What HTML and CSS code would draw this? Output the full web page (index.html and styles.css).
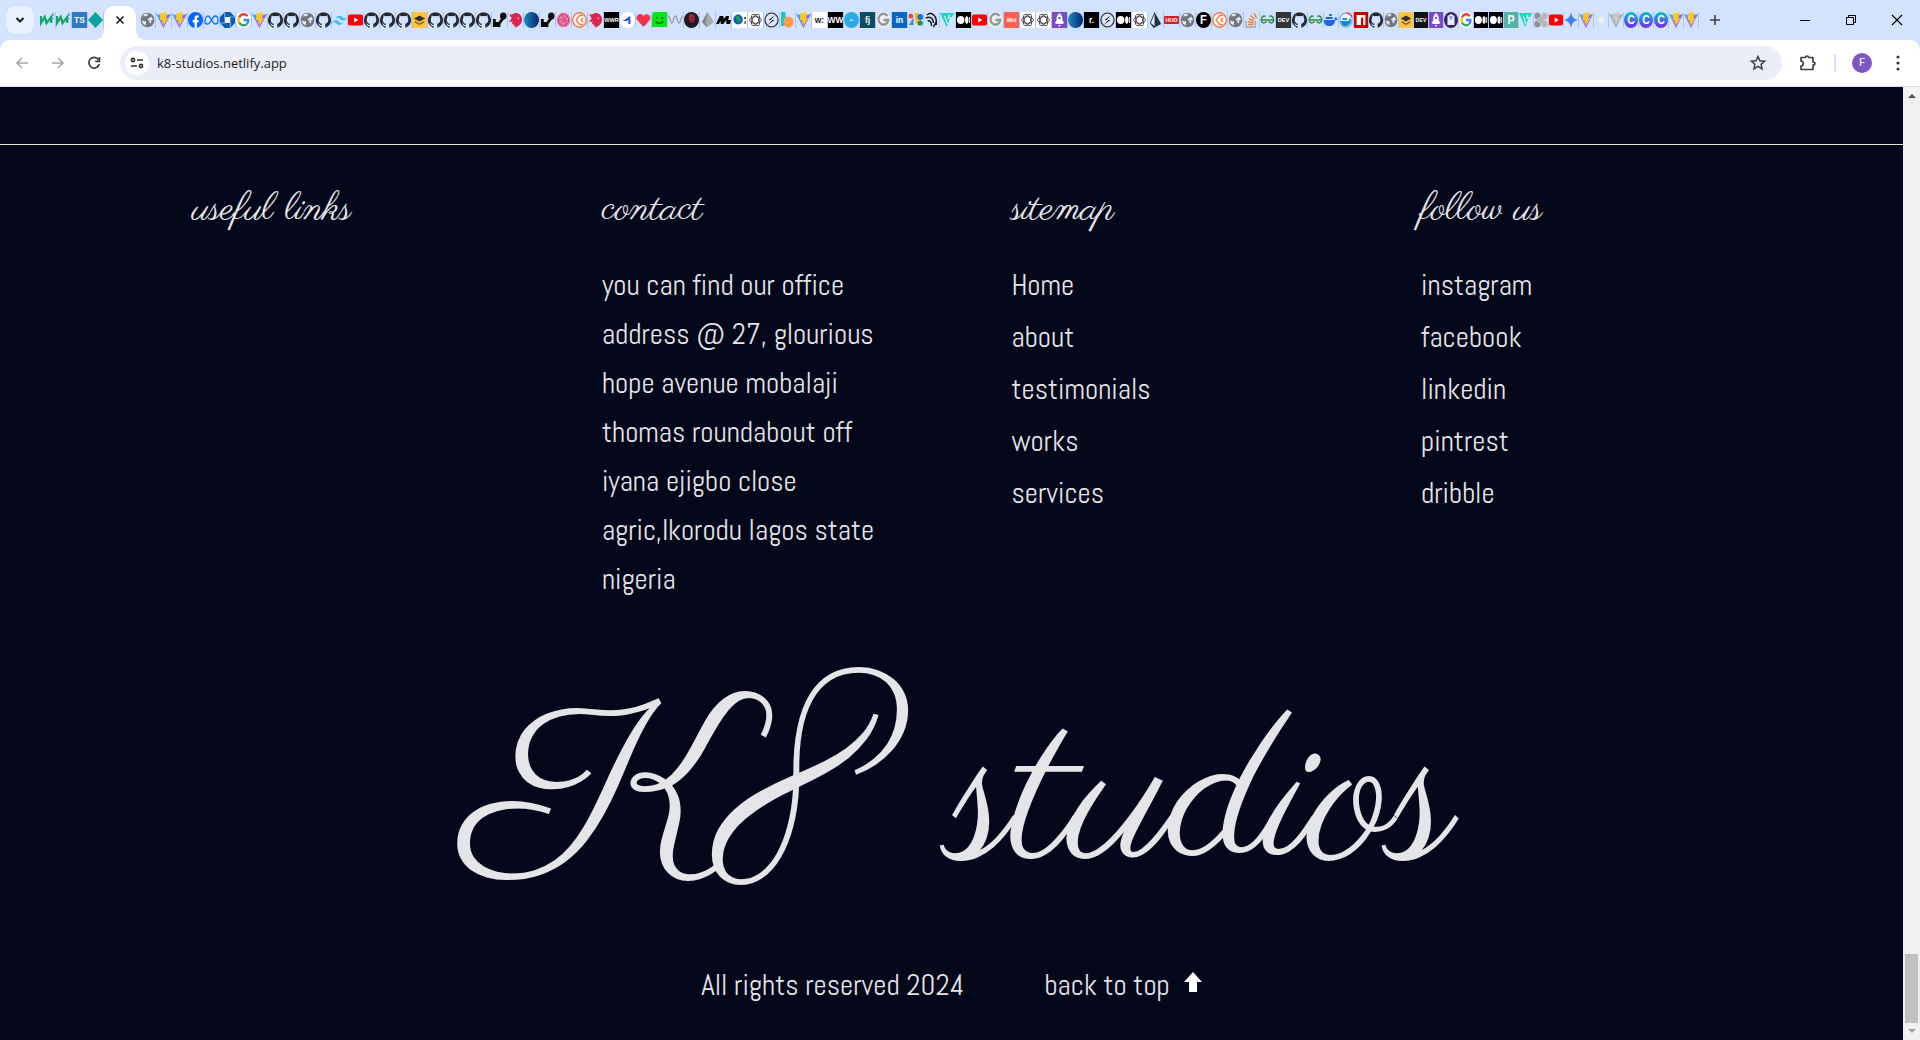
FILE: index.html
```html
<!DOCTYPE html>
<html lang="en">
<head>
<meta charset="utf-8">
<title>K8 studios</title>
<link rel="stylesheet" href="styles.css">
</head>
<body>
<svg class="sprite" aria-hidden="true">
  <defs>
    <linearGradient id="vp" x1="0" y1="0" x2="1" y2="1"><stop offset="0" stop-color="#41b0ff"/><stop offset="1" stop-color="#bd34fe"/></linearGradient>
    <linearGradient id="bg1" x1="0" y1="0" x2="1" y2="0"><stop offset="0" stop-color="#1a8fc4"/><stop offset="1" stop-color="#06256b"/></linearGradient>
    <linearGradient id="cg" x1="0" y1="0" x2="0" y2="1"><stop offset="0" stop-color="#06c1cf"/><stop offset="1" stop-color="#7a28e6"/></linearGradient>
  </defs>
  <symbol id="globe" viewBox="0 0 16 16"><circle cx="8" cy="8" r="7.300" fill="#74777a"/><path d="M3 4.500c2-1 3 .5 4.500-.5C8.500 3 8 2 9 1.500l-4 .5zM1.500 8.500l5 1c.5 1-1 2 0 4l-3-1.500zM9 6.500l3-2 2 3-2 1-.5 3-2-1.500.5-1.500-2-.5z" fill="#dde8f8"/></symbol>
  <symbol id="vite" viewBox="0 0 16 16"><path d="M0 2 8 16 16 2 8 3.500z" fill="url(#vp)"/><path d="M12 0 4.500 1.500 4.500 8.500l2.300-.5-.7 3.700 2-.6-1 4L13 6l-2.500.5z" fill="#ffc61c"/></symbol>
  <symbol id="vgrey" viewBox="0 0 16 16"><path d="M0 2 8 16 16 2 8 3.500z" fill="#a9aaad"/><path d="M12 0 4.500 1.500 4.500 8.500l2.300-.5-.7 3.700 2-.6-1 4L13 6l-2.500.5z" fill="#c9c9c9"/></symbol>
  <symbol id="fb" viewBox="0 0 16 16"><circle cx="8" cy="8" r="8" fill="#0866ff"/><path d="M7 16v-5.500H5V8h2V6.500C7 4 8.500 3 11.500 3.400v2C10 5.300 9.500 5.600 9.500 7v1h2l-.5 2.500H9.500V16z" fill="#fff"/></symbol>
  <symbol id="meta" viewBox="0 0 16 16"><path d="M1 10.500C1 6.500 2.500 4 4.500 4 7 4 9 12 12 12c2 0 3-1 3-3 0-3-1-5-3-5-3 0-5 8-8 8-2 0-3-.500-3-1.500z" fill="none" stroke="#0a73e8" stroke-width="1.400"/></symbol>
  <symbol id="oct" viewBox="0 0 16 16"><path d="M5 0h6l5 5v6l-5 5H5l-5-5V5z" fill="#0b5cab"/><path d="M5 5h6v6H5z" fill="#eaf3ff"/><path d="M5 0v6M16 5h-6M11 16v-6M0 11h6" stroke="#7fb0e6"/></symbol>
  <symbol id="google" viewBox="0 0 16 16"><circle cx="8" cy="8" r="8" fill="#fff"/><g fill="none" stroke-width="2.500"><path d="M12.300 4.200A5.300 5.300 0 0 0 3.400 5.400" stroke="#ea4335"/><path d="M3.400 5.400a5.300 5.300 0 0 0 0 5.200" stroke="#fbbc05"/><path d="M3.400 10.600a5.300 5.300 0 0 0 8 1.500" stroke="#34a853"/><path d="M11.400 12.100A5 5 0 0 0 13.200 8H8" stroke="#4285f4"/></g></symbol>
  <symbol id="ggrey" viewBox="0 0 16 16"><circle cx="8" cy="8" r="8" fill="#eee"/><path d="M12.300 4.200A5.300 5.300 0 1 0 13.200 8H8" fill="none" stroke="#929497" stroke-width="2.300"/></symbol>
  <symbol id="gh" viewBox="0 0 16 16"><path d="M8 .2a8 8 0 0 0-2.500 15.600c.4.100.5-.2.500-.4v-1.500c-2.200.5-2.700-1-2.700-1-.4-.9-.9-1.200-.9-1.200-.7-.5.100-.5.100-.5.800.1 1.200.9 1.200.9.700 1.200 1.900.9 2.300.6.100-.5.300-.8.500-1-1.800-.2-3.600-.9-3.600-4 0-.9.300-1.600.8-2.100 0-.2-.3-1 .1-2.200 0 0 .7-.2 2.200.8a7.500 7.500 0 0 1 4 0c1.500-1 2.200-.8 2.200-.8.400 1.200.1 2 .1 2.200.5.500.8 1.200.8 2.100 0 3.100-1.900 3.800-3.700 4 .3.200.6.700.6 1.500v2.200c0 .2.100.5.500.4A8 8 0 0 0 8 .2z" fill="#24292f"/></symbol>
  <symbol id="tw" viewBox="0 0 16 16"><path d="M4 7c.6-2.200 2-3.200 4-3.200 3 0 3.400 2.200 5 2.600 1 .3 2-.2 3-1.300-.6 2.200-2 3.300-4 3.300-3 0-3.400-2.200-5-2.600-1-.3-2 .1-3 1.200zM0 11.500c.6-2.200 2-3.200 4-3.200 3 0 3.400 2.200 5 2.600 1 .3 2-.2 3-1.300-.6 2.200-2 3.300-4 3.300-3 0-3.400-2.200-5-2.600-1-.3-2 .1-3 1.200z" fill="#38bdf8"/></symbol>
  <symbol id="yt" viewBox="0 0 16 16"><rect y="2.500" width="16" height="11" rx="2" fill="#f00"/><path d="m6.500 5.500 4.500 2.500-4.500 2.500z" fill="#fff"/></symbol>
  <symbol id="stack" viewBox="0 0 16 16"><path d="M0 0h16v16H0z" fill="#ffc33c"/><path d="m8 3.500 6 3-6 3-6-3z" fill="#333"/><path d="m3 9 5 2.500L13 9v1.500l-5 2.500-5-2.500z" fill="#6b6250"/></symbol>
  <symbol id="arm" viewBox="0 0 16 16"><circle cx="12" cy="4" r="3.500" fill="#0a0a0a"/><path d="M1 7h3v3h3l3-4 3 1-4 5v3H1z" fill="#0a0a0a"/></symbol>
  <symbol id="bird" viewBox="0 0 16 16"><path d="M1 2c3 2 5-1.500 8-1 4 .5 6.500 4 6 7.500C14 12.500 11 15 7 15.500l1-2-2.500.5 1-2-2.500.5 1-2.500L1 9.500l3-3z" fill="#e0234e"/><path d="m10 5.500 2 .5-1 1.500z" fill="#fff"/></symbol>
  <symbol id="blue" viewBox="0 0 16 16"><circle cx="8" cy="8" r="8" fill="url(#bg1)"/></symbol>
  <symbol id="drib" viewBox="0 0 16 16"><circle cx="8" cy="8" r="7.500" fill="#f082ac"/><path d="M5 2c4 4 5 7 6 11.500M2 8c5 0 8-1 10.500-4.500M4 13c2-4 6-5 10-4" fill="none" stroke="#bf3c78"/><circle cx="8" cy="8" r="5.500" fill="none" stroke="#bf3c78"/></symbol>
  <symbol id="orng" viewBox="0 0 16 16"><circle cx="8" cy="8" r="7.200" fill="#fff" stroke="#f47b42" stroke-width="1.500"/><path d="M12 3.500H8L4.500 8 8 12.500h4M12 6 9.500 8l2.500 2" fill="none" stroke="#f47b42" stroke-width="1.500"/></symbol>
  <symbol id="plane" viewBox="0 0 16 16"><circle cx="8" cy="8" r="8" fill="#fff"/><path d="m3 9 8-5v8H9V8L7 9z" fill="#274fc7"/></symbol>
  <symbol id="heart" viewBox="0 0 16 16"><path d="M8 15 .8 7.500C-1 4 4 0 7 3l1 1C10 1 15 2 15.500 6c.2 2-7.500 9-7.500 9z" fill="#f13352"/></symbol>
  <symbol id="face" viewBox="0 0 16 16"><path d="M1 0h15v15H0V5z" fill="#07e512"/><path d="M5 5v2M11 5v2M4 9.500c2 2.500 6 2.500 8-.5" fill="none" stroke="#064d12" stroke-width="1.300"/></symbol>
  <symbol id="wave" viewBox="0 0 16 16"><path d="M0 4c3 0 2 7 4 7s2-7 4-7 2 7 4 7 1-6 4-7" fill="none" stroke="#9b9ca1" stroke-width="1.300"/></symbol>
  <symbol id="dark" viewBox="0 0 16 16"><circle cx="8" cy="8" r="8" fill="#22191c"/><path d="M6 2c5 0 7 3 5 6l-1 3-4-1-1-5z" fill="#a52a42"/><path d="M7 6h3M7 9h2" stroke="#22191c"/></symbol>
  <symbol id="gem" viewBox="0 0 16 16"><path d="m8 0 4 8-5 7-5-5z" fill="#85868b"/><path d="m8 0 7 10-7 5-2-5z" fill="#aaa"/></symbol>
  <symbol id="mm" viewBox="0 0 16 16"><path d="m0 12 4-8h4v3l3-3h3l-1 4h3l-1 4h-4V8l-3 4H5V9l-2 3z" fill="#050505"/></symbol>
  <symbol id="earth" viewBox="0 0 16 16"><path d="M0 0h16v16H0z" fill="#fff"/><circle cx="6.500" cy="7.500" r="5" fill="#0a59c9"/><path d="M4 4h3l3 4-3 3-2-3z" fill="#19a44a"/><circle cx="14" cy="6" r="1"/><path d="M13.500 9h1v3h-1z"/></symbol>
  <symbol id="ai" viewBox="0 0 16 16"><path d="M0 0h16v16H0z" fill="#fff"/><g fill="none" stroke="#3c3c3c" stroke-width=".9"><ellipse cx="8" cy="8" rx="6.300" ry="3.400"/><ellipse cx="8" cy="8" rx="6.300" ry="3.400" transform="rotate(60 8 8)"/><ellipse cx="8" cy="8" rx="6.300" ry="3.400" transform="rotate(120 8 8)"/></g></symbol>
  <symbol id="bolt" viewBox="0 0 16 16"><circle cx="8" cy="8" r="7" fill="#d9e6fb" stroke="#222" stroke-width="1.200"/><path d="m12 3-7 5h2zM4 13l7-5H9z"/></symbol>
  <symbol id="shapes" viewBox="0 0 16 16"><path d="M1 0h5v14H1z" fill="#24c4ba"/><circle cx="9" cy="10" r="5.500" fill="#ff9d4d"/></symbol>
  <symbol id="multi" viewBox="0 0 16 16"><circle cx="3" cy="4" r="2.500" fill="#ea4335"/><path d="m7 1 4 0 1 13-4-3z" fill="#fbbc05"/><circle cx="13" cy="5" r="3" fill="#1769e0"/><path d="M1 13 6 5v8z" fill="#4285f4"/><circle cx="13" cy="11" r="2.600" fill="#238b47"/></symbol>
  <symbol id="feather" viewBox="0 0 16 16"><path d="M3 3c5-4 11 1 10 7l-3 5M2 6c4-2 8 0 8 5M4 9c3-1 4 2 4 5M6 1c5 1 8 5 7 12" fill="none" stroke="#161616" stroke-width="1.500"/></symbol>
  <symbol id="teal" viewBox="0 0 16 16"><path d="M0 1h15l-2 4H7l4 1-4 9z" fill="#22d3be"/><path d="m5 4 3 8M10 3l-1 4" stroke="#fff"/></symbol>
  <symbol id="med" viewBox="0 0 16 16"><path d="M0 0h16v16H0z"/><circle cx="5" cy="8" r="4" fill="#fff"/><ellipse cx="11.500" cy="8" rx="1.800" ry="3.800" fill="#fff"/><path d="M14.500 5v6" stroke="#fff"/></symbol>
  <symbol id="rocket" viewBox="0 0 16 16"><path d="M0 0h16v16H0z" fill="#7b4bbf"/><path d="M8 1c3 2 3.500 5 3 7l2 3-2 1H5l-2-1 2-3c-.5-2 0-5 3-7zM6.500 13h3L8 15z" fill="#fff"/><circle cx="8" cy="6" r="1.300" fill="#7b4bbf"/></symbol>
  <symbol id="prism" viewBox="0 0 16 16"><path d="m7 0 7 12-8 4-4-5z" fill="#1b3448"/><path d="m7 2 0 12-4-3z" fill="#e8f0f6"/></symbol>
  <symbol id="so" viewBox="0 0 16 16"><path d="M2 9v6h10V9" fill="none" stroke="#a5a6a9" stroke-width="1.400"/><path d="M4 12.500h6M4 9.800l6 1M5 6.700l5.500 2.500M7 3.500l4.500 4M10.500 1l3 5" stroke="#f48024" stroke-width="1.400"/></symbol>
  <symbol id="gfg" viewBox="0 0 16 16"><path d="M1 8h14M6 4.500C3 3 1 6 1.500 9c1 3 5 2 5 0M10 4.500c3-1.500 5 1.500 4.500 4.500-1 3-5 2-5 0" fill="none" stroke="#2f8d46" stroke-width="1.500"/></symbol>
  <symbol id="dock" viewBox="0 0 16 16"><path d="M0 8h12c0-2 1-3 2-3 0 1 1 2 2 2-1 1-2 1-3 1-1 5-4 6-7 6-4 0-6-2-6-6zM2 5h8v2H2zM6 2h3v2H6z" fill="#1d63ed"/></symbol>
  <symbol id="dock2" viewBox="0 0 16 16"><circle cx="8" cy="8" r="7" fill="#eef7ff" stroke="#8aabc2" stroke-width="1.400"/><path d="M2 9h9l1-3 2 2c-1 5-4 6-7 6-3 0-5-2-5-5zM4 6h5v2H4z" fill="#128ad0"/><path d="M9 1c3 0 5 2 6 4" fill="none" stroke="#f36" stroke-width="1.500"/></symbol>
  <symbol id="npm" viewBox="0 0 16 16"><path d="M0 0h16v16H0z" fill="#cb0000"/><path d="M3 3h10v10h-2.500V5.500H8V13H3z" fill="#fff"/></symbol>
  <symbol id="robe" viewBox="0 0 16 16"><circle cx="8" cy="8" r="8" fill="#33236b"/><path d="m4 4 4-2 4 2v9H4z" fill="#e9eeff"/><path d="M6 5h4M8 5v3" stroke="#3a70b4"/></symbol>
  <symbol id="grey" viewBox="0 0 16 16"><g fill="#8f9093"><circle cx="4" cy="4" r="3.500"/><circle cx="4" cy="12" r="3.500"/></g><g fill="#b8b8ba"><circle cx="12" cy="4" r="3.500"/><circle cx="12" cy="12" r="3.500"/><path d="M4 5h8v6H4z"/></g></symbol>
  <symbol id="star" viewBox="0 0 16 16"><path d="M8 0c1 5 3 7 8 8-5 1-7 3-8 8-1-5-3-7-8-8 5-1 7-3 8-8z" fill="#437fe8"/></symbol>
  <symbol id="nn" viewBox="0 0 16 16"><path d="M1 4v7l4-6 2 6 5-6v6" fill="none" stroke="#12a66c" stroke-width="2.400"/><path d="M14 1v3M14 6v1" stroke="#12a66c"/></symbol>
  <symbol id="dia" viewBox="0 0 16 16"><path d="m8 0 8 8-8 8-8-8z" fill="#0aa5a0"/></symbol>
</svg>

<header class="browser">
  <div class="tabstrip">
    <button class="search-tabs" type="button" aria-label="Search tabs"><svg width="10" height="10" viewBox="0 0 10 10"><path d="m1.500 3 3.500 3.500L8.500 3" fill="none" stroke="#1f1f1f" stroke-width="2"/></svg></button>
    <div class="tabs" data-tabs="nn nn t:TS:#3178c6:#fff dia"></div>
    <div class="active-tab"><button type="button" aria-label="Close tab"><svg width="10" height="10" viewBox="0 0 10 10"><path d="m1.500 1.500 7 7m0-7-7 7" stroke="#1f1f1f" stroke-width="1.600"/></svg></button></div>
    <div class="tabs" data-tabs="globe vite vite fb meta oct google vite gh gh globe gh tw yt gh gh gh stack gh gh gh gh arm bird blue arm drib orng bird t:WWR:#000:#fff plane heart face wave dark gem mm earth ai bolt shapes vite t:w&#58;:#fff:#222 t:WW:#000:#fff c:-:#2babe2:#bfe9fa t:fj:#0e4c62:#fff ggrey t:in:#0a66c2:#fff multi feather teal med yt ggrey t:99d:#fe5f50:#fff ai ai rocket blue t:r.:#000:#fff bolt med ai prism b:HUD:#d41f26:#fff globe c:F:#000:#fff orng globe so gfg t:DEV:#333:#fff gh gfg"></div>
    <div class="tabs tight" data-tabs="dock dock2 npm gh globe stack t:DEV:#111:#fff rocket robe google med med t:P:#55b3a5:#fff teal grey yt star vite t:tk:#d3e3fd:#f4f4f4 vgrey g:C::#fff g:C::#fff g:C::#fff vite vite"></div>
    <button class="new-tab" type="button" aria-label="New tab"><svg width="12" height="12" viewBox="0 0 12 12"><path d="M6 1v10M1 6h10" stroke="#3c4043" stroke-width="1.600"/></svg></button>
    <div class="window-controls">
      <button type="button" aria-label="Minimize"><svg width="12" height="12" viewBox="0 0 12 12"><path d="M1 6.500h10" stroke="#000"/></svg></button>
      <button type="button" aria-label="Restore"><svg width="12" height="12" viewBox="0 0 12 12"><path d="M1.500 3.500h7v7h-7zM3.500 3V1.500h7v7H9" fill="none" stroke="#000"/></svg></button>
      <button type="button" aria-label="Close"><svg width="12" height="12" viewBox="0 0 12 12"><path d="m1 1 10 10m0-10L1 11" stroke="#000" stroke-width="1.200"/></svg></button>
    </div>
  </div>
  <div class="toolbar">
    <button type="button" aria-label="Back" disabled><svg width="14" height="14" viewBox="0 0 14 14"><path d="M13 7H2m5-5L2 7l5 5" fill="none" stroke="#a6a8ab" stroke-width="1.600"/></svg></button>
    <button type="button" aria-label="Forward" disabled><svg width="14" height="14" viewBox="0 0 14 14"><path d="M1 7h11M7 2l5 5-5 5" fill="none" stroke="#a6a8ab" stroke-width="1.600"/></svg></button>
    <button type="button" aria-label="Reload"><svg width="14" height="14" viewBox="0 0 14 14"><path d="M11.500 3.700A5.300 5.300 0 1 0 12.300 8M12.500 1v4.300H8.200" fill="none" stroke="#3c4043" stroke-width="1.700"/></svg></button>
    <div class="omnibox">
      <button class="site-info" type="button" aria-label="Site information"><svg width="14" height="12" viewBox="0 0 14 12"><g fill="none" stroke="#303134" stroke-width="1.600"><circle cx="3" cy="3" r="1.600"/><path d="M7 3h6M1 9h6"/><circle cx="11" cy="9" r="1.600"/></g></svg></button>
      <input type="text" value="k8-studios.netlify.app" aria-label="Address">
      <button class="bookmark" type="button" aria-label="Bookmark"><svg width="16" height="16" viewBox="0 0 16 16"><path d="m8 1.500 1.900 4.300 4.700.4-3.500 3.100 1 4.600L8 11.400l-4.100 2.500 1-4.600-3.500-3.100 4.700-.4z" fill="none" stroke="#3c4043" stroke-width="1.500"/></svg></button>
    </div>
    <button class="extensions" type="button" aria-label="Extensions"><svg width="18" height="18" viewBox="0 0 18 18"><path d="M2 3.500h4.500c0-2 3-2 3 0H14V8c2.500 0 2.500 3 0 3v4.500H2V12c3 0 3-5 0-5z" fill="none" stroke="#3c4043" stroke-width="1.700" stroke-linejoin="round"/></svg></button>
    <span class="divider"></span>
    <button class="avatar" type="button">F</button>
    <button class="menu" type="button" aria-label="Menu"><svg width="4" height="16" viewBox="0 0 4 16"><g fill="#3c4043"><circle cx="2" cy="2" r="1.600"/><circle cx="2" cy="8" r="1.600"/><circle cx="2" cy="14" r="1.600"/></g></svg></button>
  </div>
</header>

<div class="viewport">
  <main class="page">
    <footer class="footer">
      <div class="columns">
        <section><h2>useful links</h2></section>
        <section>
          <h2>contact</h2>
          <address>you can find our office address @ 27, glourious hope avenue mobalaji thomas roundabout off iyana ejigbo close agric,Ikorodu lagos state nigeria</address>
        </section>
        <section>
          <h2>sitemap</h2>
          <ul>
            <li><a href="#home">Home</a></li>
            <li><a href="#about">about</a></li>
            <li><a href="#testimonials">testimonials</a></li>
            <li><a href="#works">works</a></li>
            <li><a href="#services">services</a></li>
          </ul>
        </section>
        <section>
          <h2>follow us</h2>
          <ul>
            <li><a href="#instagram">instagram</a></li>
            <li><a href="#facebook">facebook</a></li>
            <li><a href="#linkedin">linkedin</a></li>
            <li><a href="#pintrest">pintrest</a></li>
            <li><a href="#dribble">dribble</a></li>
          </ul>
        </section>
      </div>
      <p class="wordmark">K8 studios</p>
      <div class="legal">
        <span>All rights reserved 2024</span>
        <a href="#top">back to top <svg width="18" height="20" viewBox="0 0 18 20"><path d="m9 0 9 10h-5v10H5V10H0z" fill="#fff"/></svg></a>
      </div>
    </footer>
  </main>
  <div class="scrollbar" aria-hidden="true">
    <svg width="17" height="17" viewBox="0 0 17 17"><path d="m5 11 4-4 4 4z" fill="#505050"/></svg>
    <span class="thumb"></span>
    <svg width="17" height="17" viewBox="0 0 17 17"><path d="m5 6 4 4 4-4z" fill="#a3a3a3"/></svg>
  </div>
</div>
<script src="tabs.js"></script>
</body>
</html>
```

FILE: styles.css
```css
* { box-sizing: border-box; }

body {
  margin: 0;
  min-height: 100vh;
  display: flex;
  flex-direction: column;
  background: #05071b;
  font-family: "Abel", "Liberation Sans Narrow", "Liberation Sans", sans-serif;
}

button {
  display: flex;
  align-items: center;
  justify-content: center;
  padding: 0;
  border: 0;
  background: none;
}

.sprite { position: absolute; width: 0; height: 0; }

/* Browser bar */
.browser { background: #d3e3fd; }

.tabstrip { display: flex; align-items: center; height: 40px; }

.search-tabs {
  width: 28px;
  height: 28px;
  margin: 0 6px;
  border-radius: 10px;
  background: #e9f0fd;
}

.tabs { display: flex; }
.tabs button { width: 16px; height: 16px; border-right: 1px solid #a8c7fa; }
.tabs svg { display: block; width: 15px; height: 16px; }
.tabs.tight button { width: 15px; }
.tabs.tight svg { width: 14px; }
.tabs text { font-family: "Liberation Sans", sans-serif; font-weight: 700; }

.active-tab {
  position: relative;
  display: flex;
  align-items: center;
  justify-content: center;
  align-self: flex-end;
  width: 32px;
  height: 34px;
  padding-bottom: 6px;
  margin-right: 4px;
  border-radius: 10px 10px 0 0;
  background: #fff;
}
.active-tab::before,
.active-tab::after {
  content: "";
  position: absolute;
  bottom: 0;
  width: 10px;
  height: 10px;
}
.active-tab::before { right: 100%; background: radial-gradient(circle at 0 0, transparent 10px, #fff 10px); }
.active-tab::after { left: 100%; background: radial-gradient(circle at 100% 0, transparent 10px, #fff 10px); }

.new-tab { width: 32px; height: 28px; }

.window-controls { display: flex; margin-left: auto; }
.window-controls button { width: 46px; height: 40px; }

.toolbar {
  display: flex;
  align-items: center;
  height: 47px;
  padding: 0 12px 0 4px;
  border-radius: 10px 10px 0 0;
  border-bottom: 1px solid #dfe1e6;
  background: #fff;
}
.toolbar > button { width: 36px; height: 34px; }

.omnibox {
  display: flex;
  align-items: center;
  flex: 1;
  height: 34px;
  margin: 0 8px;
  padding: 0 16px 0 5px;
  border-radius: 17px;
  background: #ebeef8;
}
.site-info { width: 24px; height: 24px; border-radius: 50%; background: #fff; }
.omnibox input {
  flex: 1;
  min-width: 0;
  margin: 0;
  padding: 0 8px;
  border: 0;
  outline: 0;
  background: none;
  color: #1f1f1f;
  font: 13px/20px "Open Sans", "Noto Sans", sans-serif;
}
.divider { width: 2px; height: 18px; margin: 0 8px; background: #d3e3fd; }
.toolbar > .avatar {
  width: 20px;
  height: 20px;
  margin: 0 16px 0 8px;
  border-radius: 50%;
  background: #7e57c2;
  color: #fff;
  font: 11px/20px "Roboto", sans-serif;
}
.toolbar > .menu { width: 20px; }

/* Page */
.viewport { display: flex; flex: 1; }

.page { flex: 1; min-width: 0; padding-top: 57px; color: #e5e4e8; }

.scrollbar {
  display: flex;
  flex-direction: column;
  align-items: center;
  width: 17px;
  background: #f1f1f1;
}
.thumb { width: 13px; height: 69px; margin-top: auto; background: #c1c1c1; }

.footer {
  border-top: 1px solid #e3e5d8;
  padding-top: 41px;
  font-size: 29px;
  line-height: 49px;
}

.columns {
  display: grid;
  grid-template-columns: repeat(4, 1fr);
  column-gap: 118px;
  padding: 0 10%;
  margin-left: 2px;
}

h2 {
  margin: 0 0 27px;
  font: 400 40px/48px "Parisienne", "Liberation Serif", serif;
}

address { font-style: normal; }

ul {
  display: grid;
  row-gap: 3px;
  margin: 0;
  padding: 0;
  list-style: none;
}

a { color: inherit; text-decoration: none; }

.wordmark {
  margin: 60px 0 0;
  padding-left: 18px;
  font: 400 224px/280px "Parisienne", "Liberation Serif", serif;
  text-align: center;
}

.legal {
  display: flex;
  justify-content: center;
  gap: 80px;
  margin-top: 17px;
}
.legal a { display: flex; align-items: center; gap: 14px; }
.legal svg { margin-bottom: 8px; }
```

FILE: tabs.js
```js
// Fills each strip with one button per open tab. An entry is either a symbol
// id from the sprite, or "shape:label:background:colour" for lettered icons
// (t = square, b = banner, c = circle, g = gradient circle).
const sizes = { 1: 12, 2: 9, 3: 6 };

function icon(entry) {
  if (!entry.includes(":")) return `<use href="#${entry}"/>`;
  const parts = entry.split(":");
  const shape = parts.shift();
  const ink = parts.pop();
  const fill = parts.pop();
  const label = parts.join(":");
  const backs = {
    t: `<rect width="16" height="16" fill="${fill}"/>`,
    b: `<rect y="4" width="16" height="8" rx="1" fill="${fill}"/>`,
    c: `<circle cx="8" cy="8" r="8" fill="${fill}"/>`,
    g: `<circle cx="8" cy="8" r="8" fill="url(#cg)"/>`,
  };
  const size = sizes[label.length];
  return `${backs[shape]}<text x="8" y="${8 + Math.round(size / 3)}" font-size="${size}" text-anchor="middle" fill="${ink}">${label}</text>`;
}

for (const strip of document.querySelectorAll("[data-tabs]")) {
  strip.innerHTML = strip.dataset.tabs.split(" ").map((entry) =>
    `<button type="button" aria-label="Tab"><svg viewBox="0 0 16 16" preserveAspectRatio="none">${icon(entry)}</svg></button>`
  ).join("");
}
```
